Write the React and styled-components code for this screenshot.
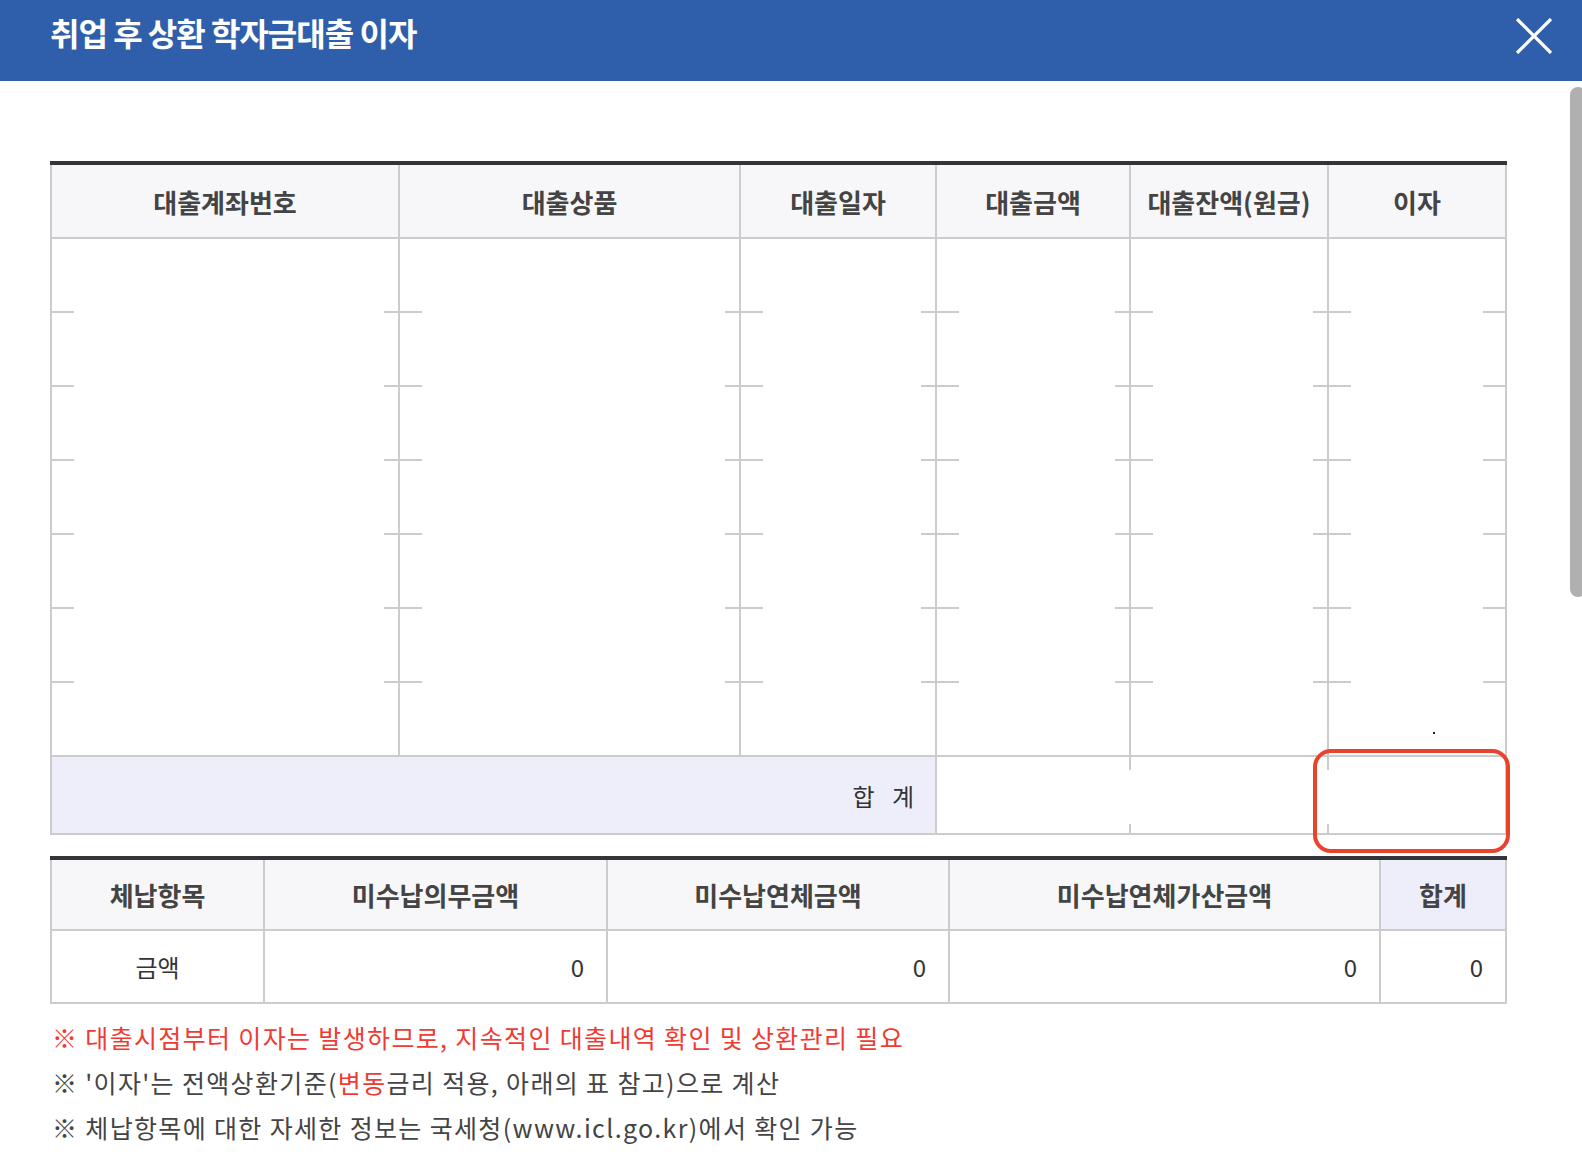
import React from 'react'
import styled, { createGlobalStyle } from 'styled-components'

const GlobalStyle = createGlobalStyle`
    html, body {
        margin: 0;
        padding: 0;
        background: #ffffff;
        overflow: hidden;
    }
    body {
        font-family: 'Noto Sans CJK KR', 'Noto Sans', sans-serif;
        color: #333;
    }
    * { box-sizing: border-box; }
`

const Page = styled.div`
    position: relative;
    width: 1582px;
    height: 1158px;
    overflow: hidden;
`

const TitleBar = styled.header`
    height: 81px;
    background: #2f5faa;
    display: flex;
    align-items: flex-start;
    justify-content: space-between;
    padding: 8px 29px 0 50px;
    h1 {
        margin: 0;
        color: #fff;
        font-size: 32px;
        font-weight: 700;
        letter-spacing: -1px;
        line-height: 48px;
    }
`

const CloseButton = styled.button`
    border: 0;
    background: none;
    padding: 0;
    margin-top: 10px;
    width: 38px;
    height: 36px;
    cursor: pointer;
    display: flex;
`

const ScrollThumb = styled.div`
    position: absolute;
    top: 87px;
    right: -4px;
    width: 16px;
    height: 510px;
    border-radius: 8px;
    background: #b0b0b0;
`

const Content = styled.main`
    padding: 80px 0 0 50px;
    width: 1505px;
`

const TableWrap = styled.div`
    position: relative;
`

const Grid = styled.table`
    width: 1455px;
    border-collapse: collapse;
    table-layout: fixed;
    border-top: 4px solid #34353a;
    margin-top: ${p => p.$gap || 0}px;
`

const Th = styled.th`
    height: ${p => p.$h || 75}px;
    background: ${p => (p.$sum ? '#eeeefa' : '#f7f7f9')};
    border: 2px solid #cccccc;
    border-top: 0;
    font-size: 26px;
    font-weight: 700;
    color: #444;
    padding: 0;
    text-align: center;
`

const BodyCell = styled.td`
    position: relative;
    height: 74px;
    border-left: 2px solid #cccccc;
    border-right: 2px solid #cccccc;
    padding: 0;
    &::before, &::after {
        content: '';
        display: ${p => (p.$tick ? 'block' : 'none')};
        position: absolute;
        top: -1px;
        height: 2px;
        background: #cccccc;
    }
    &::before { left: 0; width: 22px; }
    &::after { right: 0; width: ${p => (p.$last ? 22 : 14)}px; }
`

const Dot = styled.span`
    position: absolute;
    left: 104px;
    top: 50px;
    width: 2px;
    height: 2px;
    background: #222;
`

const SumLabel = styled.td`
    height: 78px;
    background: #eeeefa;
    border: 2px solid #cccccc;
    text-align: right;
    padding: 0 15px 0 0;
    font-size: 24px;
    color: #333;
    letter-spacing: 6px;
`

const SumCell = styled.td`
    position: relative;
    height: 78px;
    border-top: 2px solid #cccccc;
    border-bottom: 2px solid #cccccc;
    border-right: ${p => (p.$last ? '2px solid #cccccc' : '0')};
    padding: 0;
    &::before, &::after {
        content: '';
        display: ${p => (p.$stub ? 'block' : 'none')};
        position: absolute;
        left: -1px;
        width: 2px;
        background: #cccccc;
    }
    &::before { top: 0; height: 13px; }
    &::after { bottom: 0; height: 9px; }
`

const ValueCell = styled.td`
    height: 73px;
    border: 2px solid #cccccc;
    font-size: 24px;
    color: #333;
    padding: 0 ${p => (p.$center ? 0 : 22)}px 0 0;
    text-align: ${p => (p.$center ? 'center' : 'right')};
`

const Highlight = styled.div`
    position: absolute;
    left: 1263px;
    top: 588px;
    width: 197px;
    height: 104px;
    border: 4px solid #e8432c;
    border-radius: 18px;
    pointer-events: none;
`

const Notes = styled.ul`
    list-style: none;
    margin: 11px 0 0 2px;
    padding: 0;
`

const Note = styled.li`
    font-size: 25px;
    line-height: 45px;
    letter-spacing: 1.35px;
    white-space: nowrap;
    color: ${p => (p.$warn ? '#ef3b33' : '#444')};
`

const Red = styled.span`
    color: #ef3b33;
`

const loanCols = [
    { w: 348, label: '대출계좌번호' },
    { w: 341, label: '대출상품' },
    { w: 196, label: '대출일자' },
    { w: 194, label: '대출금액' },
    { w: 198, label: '대출잔액(원금)' },
    { w: 178, label: '이자' },
]

const arrearCols = [
    { w: 213, label: '체납항목' },
    { w: 343, label: '미수납의무금액' },
    { w: 342, label: '미수납연체금액' },
    { w: 431, label: '미수납연체가산금액' },
    { w: 126, label: '합계', sum: true },
]

function CloseIcon() {
    return (
        <svg width="38" height="36" viewBox="0 0 38 36">
            <path d="M2 1 L36 35 M36 1 L2 35" stroke="#fff" strokeWidth="3.2" fill="none" />
        </svg>
    )
}

export default function App() {
    const rows = Array.from({ length: 7 })
    return (
        <Page>
            <GlobalStyle />
            <TitleBar>
                <h1>취업 후 상환 학자금대출 이자</h1>
                <CloseButton aria-label="닫기"><CloseIcon /></CloseButton>
            </TitleBar>
            <ScrollThumb />
            <Content>
                <TableWrap>
                    <Grid>
                        <colgroup>
                            {loanCols.map(c => <col key={c.label} style={{ width: c.w }} />)}
                        </colgroup>
                        <thead>
                            <tr>{loanCols.map(c => <Th key={c.label}>{c.label}</Th>)}</tr>
                        </thead>
                        <tbody>
                            {rows.map((_, r) => (
                                <tr key={r}>
                                    {loanCols.map((c, i) => (
                                        <BodyCell key={c.label} $tick={r > 0} $last={i === loanCols.length - 1}>
                                            {r === 6 && i === 5 && <Dot />}
                                        </BodyCell>
                                    ))}
                                </tr>
                            ))}
                            <tr>
                                <SumLabel colSpan={3}>합 계</SumLabel>
                                <SumCell />
                                <SumCell $stub />
                                <SumCell $stub $last />
                            </tr>
                        </tbody>
                    </Grid>
                    <Highlight />
                </TableWrap>
                <Grid $gap={21}>
                    <colgroup>
                        {arrearCols.map(c => <col key={c.label} style={{ width: c.w }} />)}
                    </colgroup>
                    <thead>
                        <tr>{arrearCols.map(c => <Th key={c.label} $h={72} $sum={c.sum}>{c.label}</Th>)}</tr>
                    </thead>
                    <tbody>
                        <tr>
                            <ValueCell $center>금액</ValueCell>
                            <ValueCell>0</ValueCell>
                            <ValueCell>0</ValueCell>
                            <ValueCell>0</ValueCell>
                            <ValueCell>0</ValueCell>
                        </tr>
                    </tbody>
                </Grid>
                <Notes>
                    <Note $warn>※ 대출시점부터 이자는 발생하므로, 지속적인 대출내역 확인 및 상환관리 필요</Note>
                    <Note>※ '이자'는 전액상환기준(<Red>변동</Red>금리 적용, 아래의 표 참고)으로 계산</Note>
                    <Note>※ 체납항목에 대한 자세한 정보는 국세청(www.icl.go.kr)에서 확인 가능</Note>
                </Notes>
            </Content>
        </Page>
    )
}
